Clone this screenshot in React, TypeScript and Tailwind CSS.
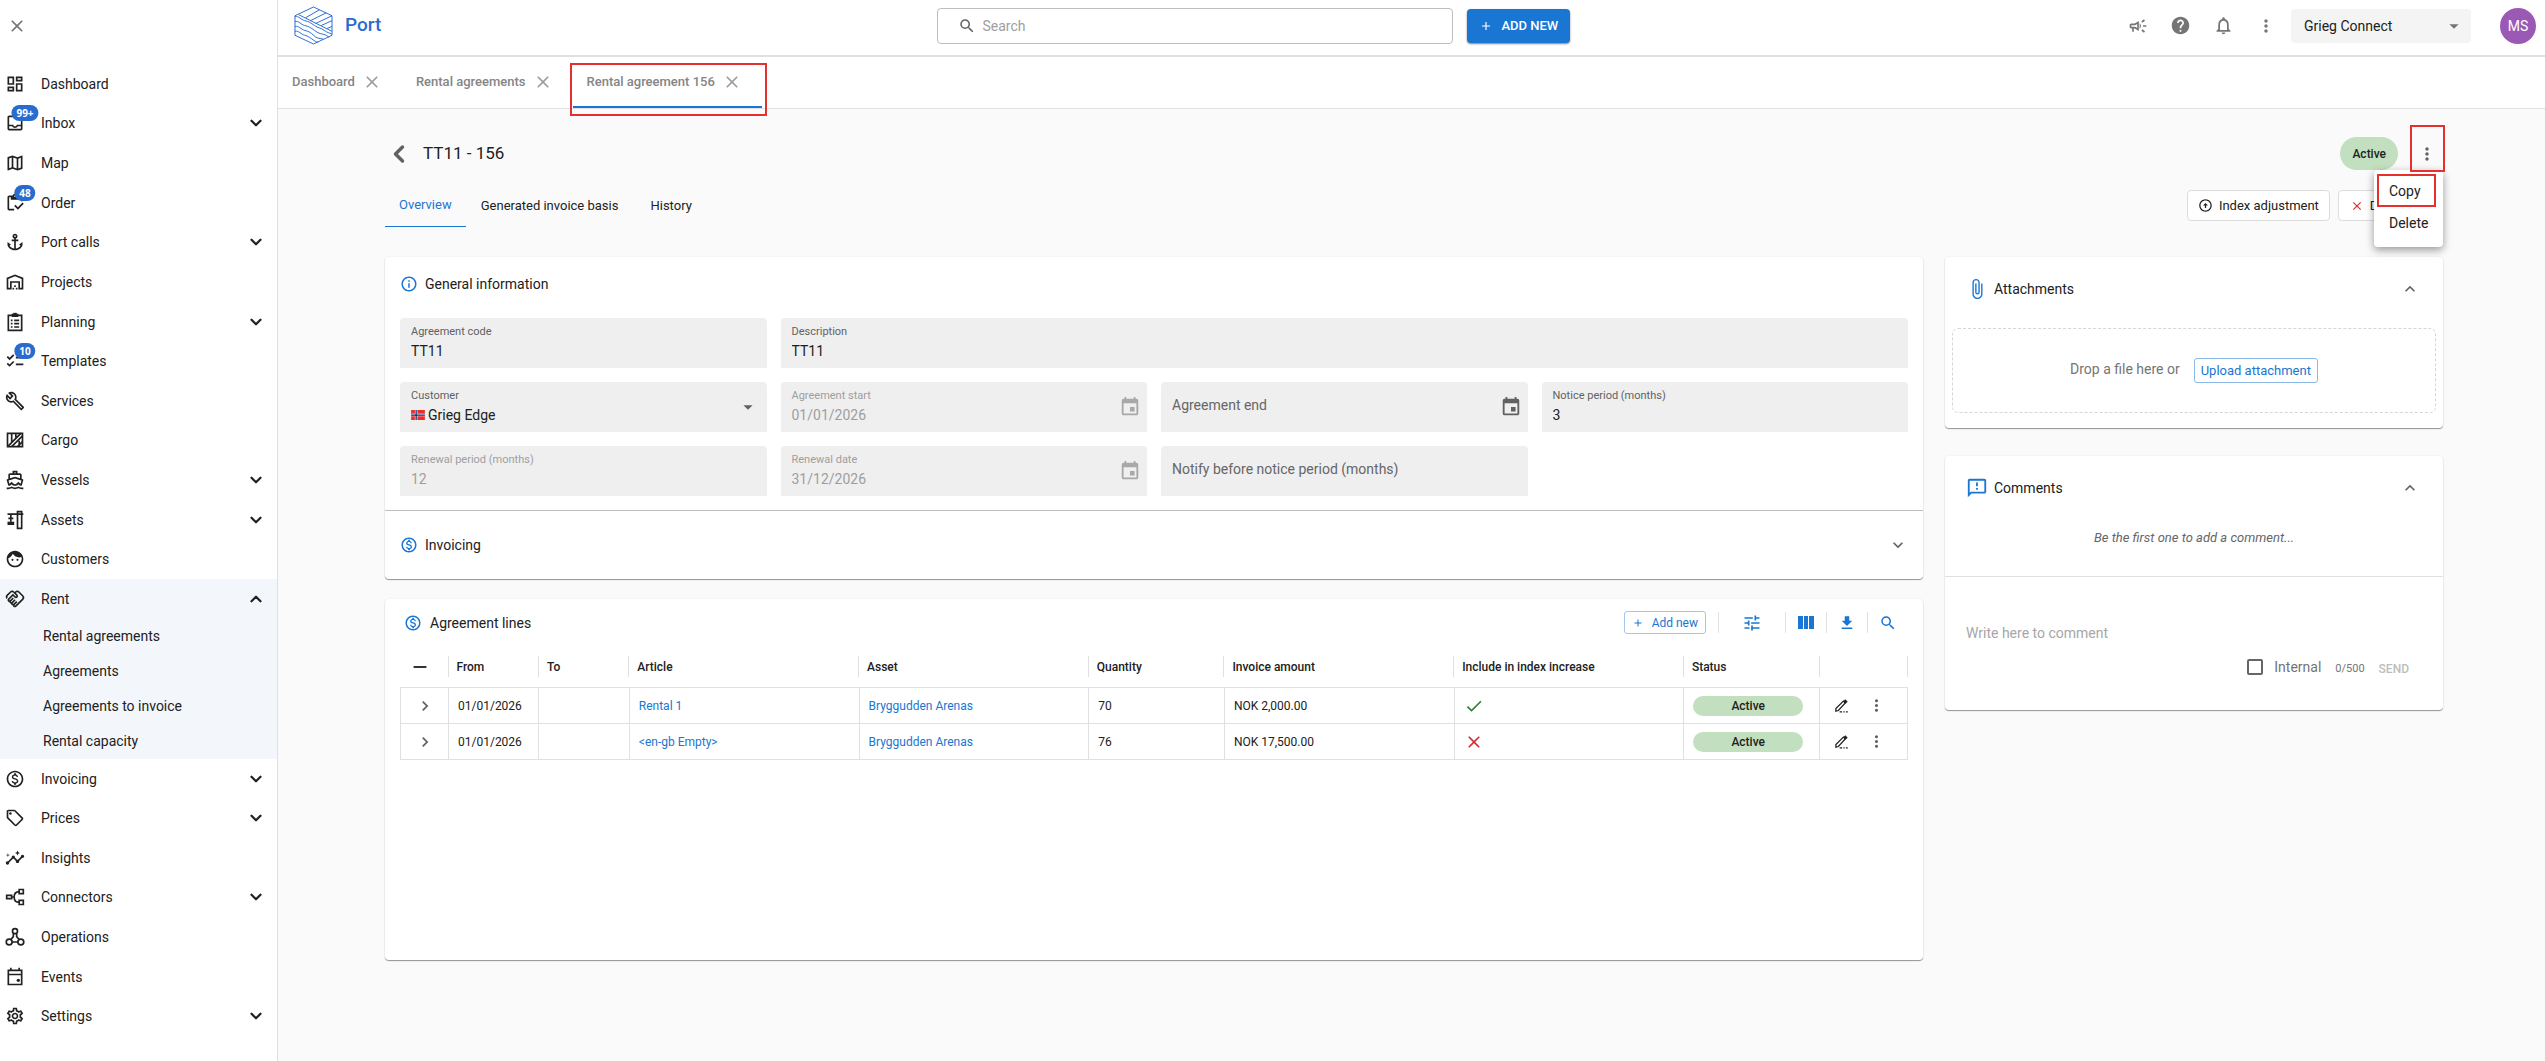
import type { ReactNode } from 'react'
import { useState } from 'react'
import type { IconType } from 'react-icons'
import { ChevronDown, ChevronLeft, ChevronUp } from 'lucide-react'
import {
  MdAdd,
  MdAnchor,
  MdArrowDropDown,
  MdAttachFile,
  MdCheck,
  MdChecklist,
  MdChevronRight,
  MdClose,
  MdEvent,
  MdExpandLess,
  MdExpandMore,
  MdFace,
  MdFileDownload,
  MdHelp,
  MdInsights,
  MdMoreVert,
  MdNotificationsNone,
  MdOutlineArrowCircleUp,
  MdOutlineBuild,
  MdOutlineCampaign,
  MdOutlineDashboard,
  MdOutlineDirectionsBoat,
  MdOutlineFeedback,
  MdOutlineHandshake,
  MdOutlineInbox,
  MdOutlineInfo,
  MdOutlineInventory,
  MdOutlineMap,
  MdOutlineMonetizationOn,
  MdOutlineSell,
  MdOutlineSettings,
  MdOutlineWarehouse,
  MdRemove,
  MdSearch,
  MdTune,
} from 'react-icons/md'

interface IconProps {
  className?: string;
}

const PlanningIcon = ({ className }: IconProps) => (
  <svg viewBox="0 0 24 24" fill="none" stroke="currentColor" strokeWidth="2" className={className}>
    <path d="M4 4h16v18H4z" />
    <path d="M8 2h8v4H8z" fill="currentColor" stroke="none" />
    <path d="M10 1h4v2h-4z" fill="currentColor" stroke="none" />
    <path d="M7 10h2M7 14h2M7 18h2M11 10h6M11 14h6M11 18h6" />
  </svg>
)

const CargoIcon = ({ className }: IconProps) => (
  <svg viewBox="0 0 24 24" fill="none" stroke="currentColor" strokeWidth="2" className={className}>
    <path d="M3 4h18v16H3z" />
    <path d="M4 19 19 4M8 20 21 7M15 20l6-6M8 4v10M13 4v5M17 13v7" />
  </svg>
)

const CraneIcon = ({ className }: IconProps) => (
  <svg viewBox="0 0 24 24" fill="none" stroke="currentColor" strokeWidth="2" className={className}>
    <path d="M15 2h5v20h-5zM3 5h19M7 5v9M4 10h6" />
    <path d="M3 14h8v4H3z" fill="currentColor" stroke="none" />
  </svg>
)

const ConnectorsIcon = ({ className }: IconProps) => (
  <svg viewBox="0 0 24 24" fill="none" stroke="currentColor" strokeWidth="2" className={className}>
    <path d="M2 10h6v4H2zM17 3h5v5h-5zM17 16h5v5h-5zM8 12h3M17 5.500c-4 0-6 3-6 6.500s2 6.500 6 6.500" />
  </svg>
)

const OperationsIcon = ({ className }: IconProps) => (
  <svg viewBox="0 0 24 24" fill="none" stroke="currentColor" strokeWidth="2" className={className}>
    <circle cx="12" cy="5" r="3" />
    <circle cx="5" cy="18" r="3.500" />
    <circle cx="19" cy="18" r="3.500" />
    <path d="M10 8v3.500L7 15M14 8v3.500L17 15M8.500 18h7" />
  </svg>
)

const EventsIcon = ({ className }: IconProps) => (
  <svg viewBox="0 0 24 24" fill="none" stroke="currentColor" strokeWidth="2" className={className}>
    <path d="M4 4h16v17H4zM4 9h16M7 1v3M17 1v3" />
    <circle cx="16" cy="16" r="2" fill="currentColor" stroke="none" />
  </svg>
)

const EditIcon = ({ className }: IconProps) => (
  <svg viewBox="0 0 24 24" fill="none" stroke="currentColor" strokeWidth="2" className={className}>
    <path d="M3 21v-4L15 5l3 3L7 20l-4 1z" />
    <path d="m15 5 3-3 4 4-4 3z" fill="currentColor" stroke="none" />
    <path d="M9 22h4M15 22h2M19 22h3" />
  </svg>
)

const Logo = ({ className }: IconProps) => (
  <svg viewBox="0 0 40 40" fill="none" stroke="currentColor" className={className}>
    <path d="M20 1 39 10v20L20 39 1 30V10z" />
    <path d="M5 9l34 17M12 12 26 4M17 15l16-8M22 18l17-8M28 20l11-5M34 23l5-2" />
    <path d="M1 11c4-1 6 3 10 4s6 2 10 5 6 2 10 5 5 2 8 4" />
    <path d="M1 16c4-1 6 3 10 4s6 2 10 5 5 3 9 4 4 2 6 3" />
    <path d="M1 21c4-1 6 3 10 4s6 2 9 5 5 3 10 4" />
    <path d="M1 26c4-1 6 3 10 4s6 3 9 5 3 2 5 2" />
  </svg>
)

const NorwegianFlag = ({ className }: IconProps) => (
  <svg viewBox="0 0 22 16" className={className}>
    <path d="M0 0h22v16H0z" fill="#ef2b2d" />
    <path d="M6 0h4v16H6zM0 6h22v4H0z" fill="#fff" />
    <path d="M7 0h2v16H7zM0 7h22v2H0z" fill="#002868" />
  </svg>
)

interface MenuItem {
  label: string;
  icon: IconType | typeof CargoIcon;
  badge?: string;
  expandable?: boolean;
  children?: string[];
}

const menu: MenuItem[] = [
  { label: 'Dashboard', icon: MdOutlineDashboard },
  { label: 'Inbox', icon: MdOutlineInbox, badge: '99+', expandable: true },
  { label: 'Map', icon: MdOutlineMap },
  { label: 'Order', icon: MdOutlineInventory, badge: '48' },
  { label: 'Port calls', icon: MdAnchor, expandable: true },
  { label: 'Projects', icon: MdOutlineWarehouse },
  { label: 'Planning', icon: PlanningIcon, expandable: true },
  { label: 'Templates', icon: MdChecklist, badge: '10' },
  { label: 'Services', icon: MdOutlineBuild },
  { label: 'Cargo', icon: CargoIcon },
  { label: 'Vessels', icon: MdOutlineDirectionsBoat, expandable: true },
  { label: 'Assets', icon: CraneIcon, expandable: true },
  { label: 'Customers', icon: MdFace },
  {
    label: 'Rent',
    icon: MdOutlineHandshake,
    expandable: true,
    children: ['Rental agreements', 'Agreements', 'Agreements to invoice', 'Rental capacity'],
  },
  { label: 'Invoicing', icon: MdOutlineMonetizationOn, expandable: true },
  { label: 'Prices', icon: MdOutlineSell, expandable: true },
  { label: 'Insights', icon: MdInsights },
  { label: 'Connectors', icon: ConnectorsIcon, expandable: true },
  { label: 'Operations', icon: OperationsIcon },
  { label: 'Events', icon: EventsIcon },
  { label: 'Settings', icon: MdOutlineSettings, expandable: true },
]

const Sidebar = () => (
  <aside className="flex min-h-screen w-[278px] shrink-0 flex-col border-r border-[#e0e0e0] bg-white">
    <button aria-label="Close menu" className="ml-[7px] mt-4 flex size-5 items-center justify-center text-[#757575]">
      <MdClose className="size-5" />
    </button>
    <nav className="mt-7 flex grow flex-col pb-[25px] text-sm">
      <ul className="flex grow flex-col">
        {menu.map((item) => {
          const Icon = item.icon
          return (
            <li key={item.label} className={item.children ? 'flex grow flex-col bg-[#f3f7fc]' : 'flex grow flex-col'}>
              <button className="flex min-h-6 grow items-center pl-[5px] pr-3 text-left">
                <span className="relative mr-4 shrink-0">
                  <Icon className="size-5" />
                  {item.badge && (
                    <span className="absolute -top-2 left-5 flex h-4 -translate-x-1/2 items-center rounded-full bg-[#2a6bd0] px-[5px] font-['Open_Sans',sans-serif] text-[10px] font-bold text-white">
                      {item.badge}
                    </span>
                  )}
                </span>
                <span className="grow">{item.label}</span>
                {item.expandable && (item.children
                  ? <ChevronUp className="size-[18px]" strokeWidth={3} />
                  : <ChevronDown className="size-[18px]" strokeWidth={3} />)}
              </button>
              {item.children && (
                <ul>
                  {item.children.map((child) => (
                    <li key={child}>
                      <a href="#" className="flex h-[35px] items-center pl-[43px]">{child}</a>
                    </li>
                  ))}
                </ul>
              )}
            </li>
          )
        })}
      </ul>
    </nav>
  </aside>
)

const Header = () => (
  <header className="flex h-[57px] items-center border-b-2 border-[#e0e0e0] bg-white pb-1 pl-4 pr-[9px]">
    <a href="#" className="flex w-[28.7%] items-center gap-3 text-[#2a6bd0]">
      <Logo className="size-[39px]" />
      <span className="text-[19px] font-medium">Port</span>
    </a>
    <label className="flex h-9 w-[516px] items-center rounded-[4px] border border-[#bdbdbd] px-5 text-sm">
      <MdSearch className="size-[18px] text-[#616161]" />
      <input type="text" aria-label="Search" placeholder="Search" className="ml-1.5 grow outline-none placeholder:text-[#9e9e9e]" />
    </label>
    <button className="ml-3.5 flex h-[34px] items-center gap-2 rounded-[4px] bg-[#1976d2] px-3 text-[13px] font-medium text-white shadow-[0_1px_2px_rgba(0,0,0,0.5)]">
      <MdAdd className="size-3.5" />
      ADD NEW
    </button>
    <div className="ml-auto flex items-center text-[#757575]">
      <button aria-label="News" className="mr-[22px]"><MdOutlineCampaign className="size-5" /></button>
      <button aria-label="Help" className="mr-[22px]"><MdHelp className="size-[21px]" /></button>
      <button aria-label="Notifications" className="mr-[22px]"><MdNotificationsNone className="size-[21px]" /></button>
      <button aria-label="More" className="mr-[15px]"><MdMoreVert className="size-5" /></button>
      <div className="relative">
        <select aria-label="Company" className="h-[34px] w-[180px] appearance-none rounded-[4px] bg-[#f4f4f4] pl-[13px] text-sm text-[#212121]">
          <option>Grieg Connect</option>
        </select>
        <MdArrowDropDown className="pointer-events-none absolute right-1.5 top-1.5 size-[22px]" />
      </div>
      <button className="ml-[29px] size-9 rounded-full bg-[#9b59b6] text-sm text-white">MS</button>
    </div>
  </header>
)

const openTabs = ['Dashboard', 'Rental agreements', 'Rental agreement 156']

const TabBar = () => (
  <div className="flex h-[52px] border-b border-[#e0e0e0] bg-white">
    {openTabs.map((tab, index) => {
      const active = index === openTabs.length - 1
      return (
        <div
          key={tab}
          className={`relative flex items-center gap-[7px] border-b-2 pl-3.5 pr-5 ${active ? 'border-[#1976d2]' : 'border-transparent'}`}
        >
          <a href="#" className="text-[13px] font-medium text-[#858585]">{tab}</a>
          <button aria-label={`Close ${tab}`} className="text-[#9e9e9e]"><MdClose className="size-5" /></button>
          {active && <span className="pointer-events-none absolute -bottom-2.5 -left-[3px] -right-[5px] top-1.5 border-2 border-[#e53030]" />}
        </div>
      )
    })}
  </div>
)

const TitleBar = () => (
  <div className="flex items-center">
    <button aria-label="Back" className="text-[#616161]"><ChevronLeft className="size-7" strokeWidth={3} /></button>
    <h1 className="ml-2.5 text-[17px]">TT11 - 156</h1>
    <span className="ml-auto flex h-[33px] items-center rounded-full bg-[#c2e0bf] px-3 text-xs font-medium">Active</span>
    <div className="relative ml-[19px] mr-1.5">
      <button aria-label="Agreement actions" className="block text-[#616161]"><MdMoreVert className="size-5" /></button>
      <span className="pointer-events-none absolute -bottom-2 -left-[7px] -right-2 -top-[19px] z-20 border-2 border-[#e53030]" />
      <div className="absolute -right-1.5 top-[26px] z-10 w-[69px] rounded-[4px] bg-white pb-2 pt-[5px] text-sm shadow-[0_3px_8px_rgba(0,0,0,0.4)]">
        <button className="relative block h-8 w-full pl-[15px] text-left">
          Copy
          <span className="absolute -top-px bottom-0 left-[3px] right-[7px] border-2 border-[#e53030]" />
        </button>
        <button className="block h-8 w-full pl-[15px] text-left">Delete</button>
      </div>
    </div>
  </div>
)

const PageTabs = () => (
  <div className="mt-5 flex h-[37px] items-start">
    <div className="flex h-full text-[13px]">
      <a href="#" className="flex items-center border-b border-[#1976d2] px-3.5 pb-1.5 text-[#1976d2]">Overview</a>
      <a href="#" className="flex items-center px-[15px] pb-1.5">Generated invoice basis</a>
      <a href="#" className="flex items-center px-[17px] pb-1.5">History</a>
    </div>
    <div className="ml-auto flex gap-2 text-[13px]">
      <button className="flex h-[31px] items-center gap-1.5 rounded-[4px] border border-[#dcdcdc] bg-white px-2.5">
        <MdOutlineArrowCircleUp className="size-[15px]" />
        Index adjustment
      </button>
      <button className="flex h-[31px] items-center gap-1.5 rounded-[4px] border border-[#dcdcdc] bg-white px-[11px]">
        <MdClose className="size-[14px] text-[#d32f2f]" />
        Deactivate
      </button>
    </div>
  </div>
)

interface FieldProps {
  id: string;
  label: string;
  value?: string;
  disabled?: boolean;
  date?: boolean;
  wide?: boolean;
}

const Field = ({ id, label, value, disabled, date, wide }: FieldProps) => (
  <div
    className={`flex h-[50px] items-center rounded-t-[4px] bg-[#efefef] pl-[11px] pr-1.5 ${wide ? 'col-span-3' : ''} ${disabled ? 'text-[#9e9e9e]' : ''}`}
  >
    <div className="relative flex h-full min-w-0 grow flex-col">
      <label
        htmlFor={id}
        className={
          value
            ? `pt-[7px] text-[11px] leading-[14px] ${disabled ? '' : 'text-[#616161]'}`
            : 'absolute left-0 top-[13px] text-sm text-[#666666]'
        }
      >
        {label}
      </label>
      <input id={id} type="text" defaultValue={value} disabled={disabled} className="w-full grow pb-1.5 text-sm outline-none" />
    </div>
    {date && <MdEvent className={`size-[22px] shrink-0 ${disabled ? 'text-[#a8a8a8]' : 'text-[#616161]'}`} />}
  </div>
)

const CustomerField = () => (
  <div className="relative h-[50px] rounded-t-[4px] bg-[#efefef] px-[11px]">
    <label htmlFor="customer" className="block pt-[7px] text-[11px] leading-[14px] text-[#616161]">Customer</label>
    <div className="flex items-center gap-[3px]">
      <NorwegianFlag className="h-2.5 w-3.5" />
      <select id="customer" className="h-6 grow appearance-none text-sm outline-none">
        <option>Grieg Edge</option>
      </select>
    </div>
    <MdArrowDropDown className="pointer-events-none absolute right-2 top-3.5 size-[22px] text-[#616161]" />
  </div>
)

const cardClass = 'rounded-[4px] bg-white shadow-[0_1px_1px_rgba(0,0,0,0.4),0_0_2px_rgba(0,0,0,0.08)]'

const GeneralCard = () => (
  <section className={cardClass}>
    <div className="border-b border-[#bdbdbd] px-[15px] pb-3.5">
      <h2 className="flex items-center gap-[7px] pb-6 pt-[17px] text-sm">
        <MdOutlineInfo className="size-[18px] text-[#1976d2]" />
        General information
      </h2>
      <div className="grid grid-cols-4 gap-3.5">
        <Field id="code" label="Agreement code" value="TT11" />
        <Field id="description" label="Description" value="TT11" wide />
        <CustomerField />
        <Field id="start" label="Agreement start" value="01/01/2026" disabled date />
        <Field id="end" label="Agreement end" date />
        <Field id="notice" label="Notice period (months)" value="3" />
        <Field id="renewal-period" label="Renewal period (months)" value="12" disabled />
        <Field id="renewal-date" label="Renewal date" value="31/12/2026" disabled date />
        <Field id="notify" label="Notify before notice period (months)" />
      </div>
    </div>
    <button className="flex h-[68px] w-full items-center gap-[7px] px-[15px] text-sm">
      <MdOutlineMonetizationOn className="size-[18px] text-[#1976d2]" />
      Invoicing
      <MdExpandMore className="ml-auto size-5 text-[#616161]" />
    </button>
  </section>
)

interface Line {
  from: string;
  article: string;
  asset: string;
  quantity: number;
  amount: string;
  indexed: boolean;
}

const lines: Line[] = [
  { from: '01/01/2026', article: 'Rental 1', asset: 'Bryggudden Arenas', quantity: 70, amount: 'NOK 2,000.00', indexed: true },
  { from: '01/01/2026', article: '<en-gb Empty>', asset: 'Bryggudden Arenas', quantity: 76, amount: 'NOK 17,500.00', indexed: false },
]

const columns = ['From', 'To', 'Article', 'Asset', 'Quantity', 'Invoice amount', 'Include in index increase', 'Status', '']

const Th = ({ children }: { children?: ReactNode }) => (
  <th className="pb-2.5 text-left font-medium">
    <span className="flex h-[21px] items-center border-r border-[#e0e0e0] pl-2">{children}</span>
  </th>
)

const tdClass = 'border border-[#e0e0e0] pl-[9px]'

const LinesTable = () => (
  <table className="w-full table-fixed border-collapse text-xs">
    <colgroup>
      <col className="w-12" />
      <col className="w-[6%]" />
      <col className="w-[6%]" />
      <col />
      <col />
      <col className="w-[9%]" />
      <col />
      <col />
      <col className="w-[9%]" />
      <col className="w-[88px]" />
    </colgroup>
    <thead>
      <tr>
        <Th><MdRemove className="size-[22px]" /></Th>
        {columns.map((column) => <Th key={column}>{column}</Th>)}
      </tr>
    </thead>
    <tbody>
      {lines.map((line) => (
        <tr key={line.article} className="h-9">
          <td className="border border-[#e0e0e0] pl-3.5">
            <button aria-label="Expand row" className="block text-[#616161]"><MdChevronRight className="size-5" /></button>
          </td>
          <td className={tdClass}>{line.from}</td>
          <td className={tdClass} />
          <td className={tdClass}><a href="#" className="text-[#1976d2]">{line.article}</a></td>
          <td className={tdClass}><a href="#" className="text-[#1976d2]">{line.asset}</a></td>
          <td className={tdClass}>{line.quantity}</td>
          <td className={tdClass}>{line.amount}</td>
          <td className={tdClass}>
            {line.indexed ? <MdCheck className="size-5 text-[#2e7d32]" /> : <MdClose className="size-5 text-[#d32f2f]" />}
          </td>
          <td className={tdClass}>
            <span className="mr-4 flex h-5 items-center justify-center rounded-full bg-[#c2e0bf] font-medium">Active</span>
          </td>
          <td className="border border-[#e0e0e0]">
            <div className="flex items-center pl-3.5">
              <button aria-label="Edit line"><EditIcon className="size-[15px]" /></button>
              <button aria-label="Line actions" className="ml-[18px] text-[#616161]"><MdMoreVert className="size-[19px]" /></button>
            </div>
          </td>
        </tr>
      ))}
    </tbody>
  </table>
)

const LinesCard = () => (
  <section className={`mt-5 min-h-[361px] px-[15px] pt-3 ${cardClass}`}>
    <div className="flex items-center pl-1 text-[#1976d2]">
      <MdOutlineMonetizationOn className="size-[18px]" />
      <h2 className="ml-2 text-sm text-[#212121]">Agreement lines</h2>
      <button className="ml-auto flex h-[23px] items-center gap-2 rounded-[3px] border border-[#a3c8ed] px-[7px] text-xs">
        <MdAdd className="size-3" />
        Add new
      </button>
      <div className="ml-3 flex h-[21px] items-center border-l border-[#e0e0e0] px-[23px]">
        <button aria-label="Filter"><MdTune className="size-5" /></button>
      </div>
      <div className="flex h-[21px] items-center border-l border-[#e0e0e0] px-3">
        <button aria-label="Columns" className="flex h-[13px] w-4 gap-px">
          <span className="h-full grow bg-current" />
          <span className="h-full grow bg-current" />
          <span className="h-full grow bg-current" />
        </button>
      </div>
      <div className="flex h-[21px] items-center border-l border-[#e0e0e0] px-[11px]">
        <button aria-label="Download"><MdFileDownload className="size-[18px]" /></button>
      </div>
      <div className="flex h-[21px] items-center border-l border-[#e0e0e0] px-[11px]">
        <button aria-label="Search lines"><MdSearch className="size-[18px]" /></button>
      </div>
    </div>
    <div className="mt-[22px]">
      <LinesTable />
    </div>
  </section>
)

const AttachmentsCard = () => (
  <section className={`px-[7px] pb-[15px] ${cardClass}`}>
    <h2 className="flex h-16 items-center pl-3.5 pr-4 text-sm">
      <MdAttachFile className="size-[22px] text-[#1976d2]" />
      <span className="ml-1.5 grow">Attachments</span>
      <MdExpandLess className="size-5 text-[#616161]" />
    </h2>
    <div className="mt-[7px] flex h-[85px] items-center justify-center gap-3.5 rounded-[6px] border border-dashed border-[#d6d6d6] text-sm text-[#757575]">
      <span className="pb-1">Drop a file here or</span>
      <button className="h-[25px] rounded-[3px] border border-[#8cbae8] px-1.5 text-[13px] leading-[23px] text-[#1976d2]">Upload attachment</button>
    </div>
  </section>
)

const CommentsCard = () => {
  const [text, setText] = useState('')

  return (
    <section className={`mt-7 ${cardClass}`}>
      <h2 className="flex h-16 items-center pl-[21px] pr-[23px] text-sm">
        <MdOutlineFeedback className="size-[22px] text-[#1976d2]" />
        <span className="ml-1.5 grow">Comments</span>
        <MdExpandLess className="size-5 text-[#616161]" />
      </h2>
      <p className="pb-7 pt-2 text-center text-[13px] italic leading-5 text-[#666666]">Be the first one to add a comment...</p>
      <div className="border-t border-[#e0e0e0] pb-[31px] pl-[21px] pr-[34px] pt-[46px]">
        <textarea
          aria-label="Comment"
          rows={1}
          maxLength={500}
          value={text}
          onChange={(e) => setText(e.target.value)}
          placeholder="Write here to comment"
          className="block h-[22px] w-full resize-none text-sm outline-none placeholder:text-[#a6a6a6]"
        />
        <div className="mt-2.5 flex h-6 items-center justify-end text-[#757575]">
          <label className="flex items-center gap-[11px] text-sm">
            <input type="checkbox" className="size-4 appearance-none rounded-[2px] border-2 border-[#666666]" />
            Internal
          </label>
          <span className="ml-3.5 pt-1 text-[11px]">{text.length}/500</span>
          <button className="ml-3.5 pt-1 text-xs font-medium text-[#bdbdbd]" disabled={!text}>SEND</button>
        </div>
      </div>
    </section>
  )
}

export default function App() {
  return (
    <div className="flex min-h-screen bg-[#fafafa] font-[Roboto,sans-serif] text-[#212121]">
      <Sidebar />
      <div className="flex min-w-0 grow flex-col">
        <Header />
        <TabBar />
        <main className="pb-8 pl-[107px] pr-[102px] pt-7">
          <TitleBar />
          <PageTabs />
          <div className="mt-[30px] grid grid-cols-[minmax(0,1fr)_498px] items-start gap-[22px]">
            <div>
              <GeneralCard />
              <LinesCard />
            </div>
            <div>
              <AttachmentsCard />
              <CommentsCard />
            </div>
          </div>
        </main>
      </div>
    </div>
  )
}
